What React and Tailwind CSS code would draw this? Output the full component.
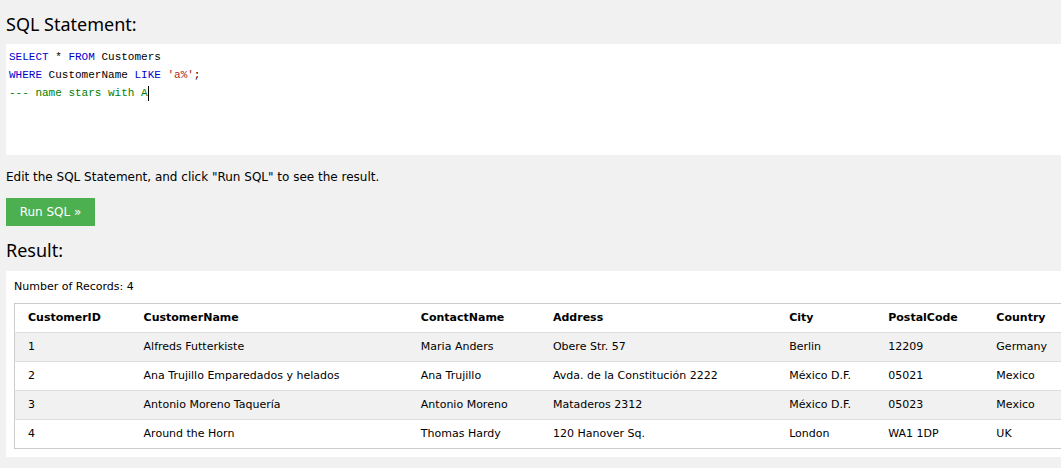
import React from "react";

const rows = [
  ["1", "Alfreds Futterkiste", "Maria Anders", "Obere Str. 57", "Berlin", "12209", "Germany"],
  ["2", "Ana Trujillo Emparedados y helados", "Ana Trujillo", "Avda. de la Constitución 2222", "México D.F.", "05021", "Mexico"],
  ["3", "Antonio Moreno Taquería", "Antonio Moreno", "Mataderos 2312", "México D.F.", "05023", "Mexico"],
  ["4", "Around the Horn", "Thomas Hardy", "120 Hanover Sq.", "London", "WA1 1DP", "UK"],
];

const cols = [
  { name: "CustomerID", w: "w-[116px]" },
  { name: "CustomerName", w: "w-[277px]" },
  { name: "ContactName", w: "w-[132px]" },
  { name: "Address", w: "w-[236px]" },
  { name: "City", w: "w-[99px]" },
  { name: "PostalCode", w: "w-[108px]" },
  { name: "Country", w: "w-[110px]" },
];

export default function App() {
  return (
    <div className="w-[1061px] h-[468px] overflow-hidden bg-[#f1f1f1] pl-[6px] text-black font-['DejaVu_Sans',Verdana,sans-serif]">
      <h2 className="pt-[12px] h-[44px] text-[18px] leading-[24px] font-['Noto_Sans',sans-serif] font-normal">
        SQL Statement:
      </h2>
      <div className="bg-white h-[111px] pt-[4px] pl-[3px] font-['Liberation_Mono',monospace] text-[11px] leading-[18px]">
        <div>
          <span className="text-[#0000cd]">SELECT</span> * <span className="text-[#0000cd]">FROM</span> Customers
        </div>
        <div>
          <span className="text-[#0000cd]">WHERE</span> CustomerName <span className="text-[#0000cd]">LIKE</span>{" "}
          <span className="text-[#a52a2a]">'a%'</span>;
        </div>
        <div className="text-[#008000] flex items-center">
          --- name stars with A<span className="inline-block w-px h-[15px] bg-black"></span>
        </div>
      </div>
      <p className="mt-[14px] text-[12px] leading-[16px]">
        Edit the SQL Statement, and click "Run SQL" to see the result.
      </p>
      <button className="mt-[13px] block w-[89px] h-[28px] bg-[#4caf50] text-white text-[12px]">
        Run SQL »
      </button>
      <h2 className="mt-[12px] h-[33px] text-[18px] leading-[24px] font-['Noto_Sans',sans-serif] font-normal">
        Result:
      </h2>
      <div className="bg-white w-[1100px] h-[186px] pl-[8px] pt-[9px]">
        <div className="text-[11px] leading-[14px] h-[23px]">Number of Records: 4</div>
        <table className="border-collapse border border-[#ccc] w-[1080px] text-[11px] table-fixed">
          <thead>
            <tr>
              {cols.map((c) => (
                <th key={c.name} className={`${c.w} h-[29px] pl-[13px] text-left font-bold align-middle`}>
                  {c.name}
                </th>
              ))}
            </tr>
          </thead>
          <tbody>
            {rows.map((r, i) => (
              <tr key={i} className={`border-t border-[#ddd] ${i % 2 === 0 ? "bg-[#f1f1f1]" : "bg-white"}`}>
                {r.map((v, j) => (
                  <td key={j} className="h-[29px] pl-[13px] align-middle whitespace-nowrap">
                    {v}
                  </td>
                ))}
              </tr>
            ))}
          </tbody>
        </table>
      </div>
    </div>
  );
}
